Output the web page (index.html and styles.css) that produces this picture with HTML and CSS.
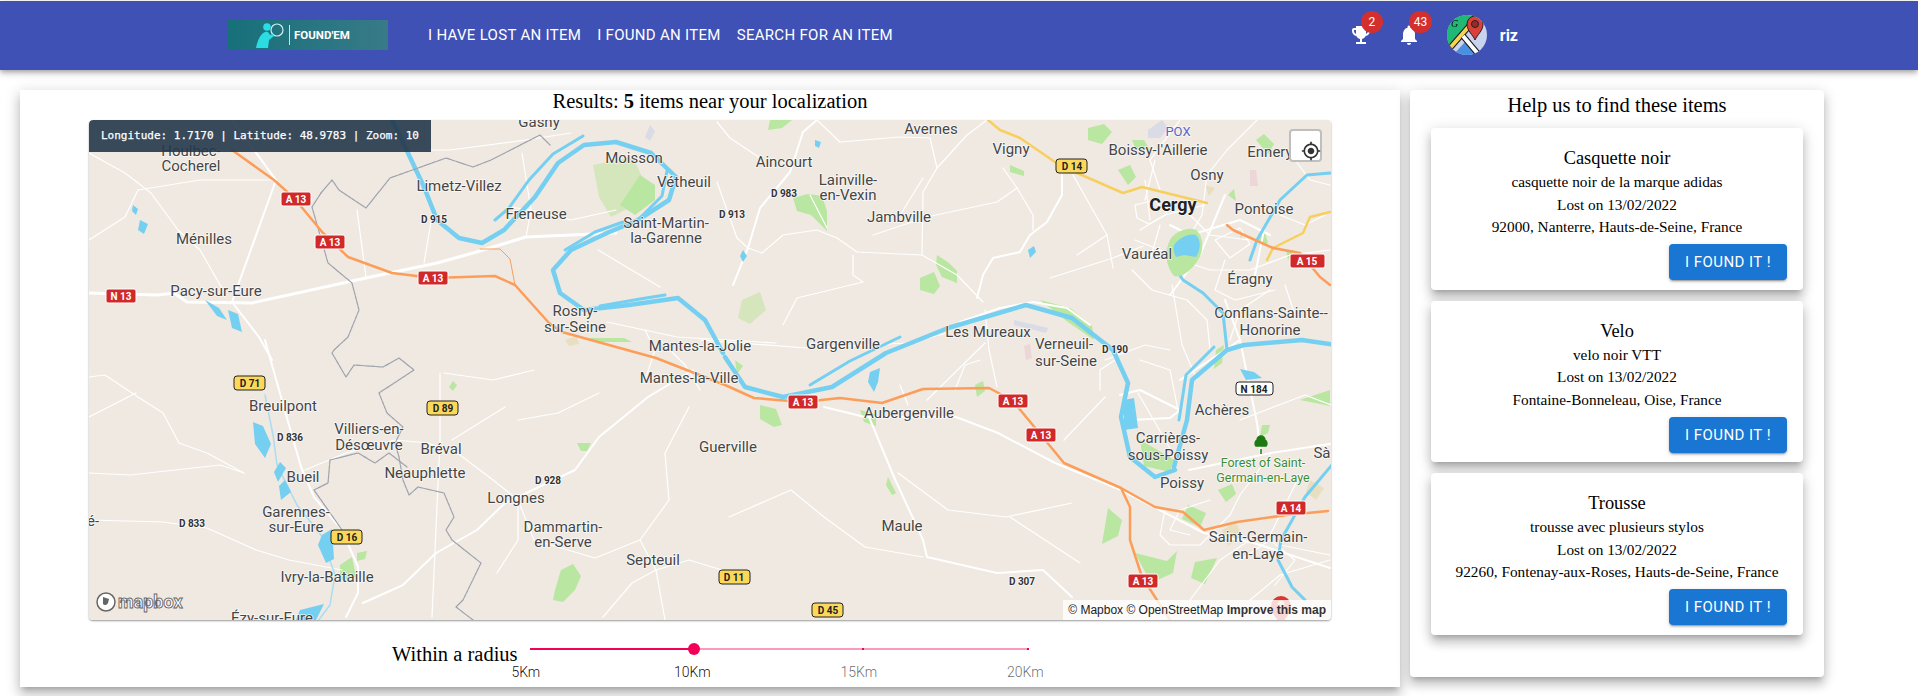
FILE: index.html
```html
<!DOCTYPE html>
<html lang="en">
<head>
  <meta charset="UTF-8" />
  <title>Found'em</title>
  <link rel="stylesheet" href="styles.css">
</head>
<body>

  <header class="topbar">
    <a class="logo" href="#">
      <svg width="30" height="26" viewBox="0 0 30 26">
        <circle cx="22" cy="8" r="6" fill="none" stroke="#cfeff2" stroke-width="1.2"/>
        <path d="M18 13l-3 2" stroke="#2bdde2" stroke-width="2"/>
        <circle cx="12" cy="5" r="3.8" fill="#2bdde2"/>
        <path d="M1 26c1-6 4-14 9-16 3-1 4 1 5 3l3-1 1 2-5 4-1 8z" fill="#2bdde2"/>
      </svg>
      <span class="logo-sep"></span>
      <span class="logo-text">FOUND'EM</span>
    </a>
    <nav class="nav">
      <a href="#">I have lost an item</a>
      <a href="#">I found an item</a>
      <a href="#">Search for an item</a>
    </nav>
    <div class="user">
      <div class="icon-btn">
        <svg viewBox="0 0 24 24" width="24" height="24"><path fill="#fff" d="M19 5h-2V3H7v2H5c-1.1 0-2 .9-2 2v1c0 2.55 1.92 4.63 4.39 4.94.63 1.5 1.98 2.63 3.61 2.96V19H7v2h10v-2h-4v-3.1c1.63-.33 2.98-1.46 3.61-2.96C19.08 12.63 21 10.55 21 8V7c0-1.1-.9-2-2-2zM5 8V7h2v3.82C5.84 10.4 5 9.3 5 8zm14 0c0 1.3-.84 2.4-2 2.82V7h2v1z"/></svg>
        <span class="badge">2</span>
      </div>
      <div class="icon-btn">
        <svg viewBox="0 0 24 24" width="24" height="24"><path fill="#fff" d="M12 22c1.1 0 2-.9 2-2h-4c0 1.1.89 2 2 2zm6-6v-5c0-3.07-1.64-5.64-4.5-6.32V4c0-.83-.67-1.5-1.5-1.5s-1.5.67-1.5 1.5v.68C7.63 5.36 6 7.92 6 11v5l-2 2v1h16v-1l-2-2z"/></svg>
        <span class="badge">43</span>
      </div>
      <svg class="avatar" viewBox="0 0 40 40" width="40" height="40">
        <rect width="40" height="40" fill="#c9d3ee"/>
        <path d="M0 0h22L0 36z" fill="#20b877"/>
        <path d="M0 0h28v6L6 30 0 36z" fill="#20b877"/>
        <path d="M6 40l12-13 13 13z" fill="#4a90e2"/>
        <path d="M3 33L24 9" stroke="#111" stroke-width="6"/>
        <path d="M3 33L24 9" stroke="#f7d354" stroke-width="4"/>
        <path d="M16 21l16 19" stroke="#111" stroke-width="6"/>
        <path d="M16 21l16 19" stroke="#fff" stroke-width="4"/>
        <path d="M28 25c-2-5-8-9-8-16a8 8 0 0 1 16 0c0 7-6 11-8 16z" fill="#d8403a" stroke="#222" stroke-width="1"/>
        <circle cx="28" cy="9" r="3.5" fill="#9b2a26" stroke="#222"/>
        <text x="4" y="12" class="avatar-g">G</text>
      </svg>
      <span class="username">riz</span>
    </div>
  </header>

  <main class="content">
    <section class="panel results">
      <h2 class="panel-title results-title">Results: <b>5</b> items near your localization</h2>

      <div class="map">
        <svg class="map-canvas" viewBox="89 120 1242 500" width="1242" height="500">
          <rect x="89" y="120" width="1242" height="500" fill="#efe9e1"/>

          <!-- zones urbaines -->
          <path class="urban" d="M1222 530l14-8 6 14-14 10z"/>
          <path class="urban" d="M565 340l12-4 2 8-10 2z"/>
          <path class="urban" d="M655 345l6-4 4 8-6 2z"/>
          <path class="urban" d="M1205 185l10 3-6 8z"/>
          <path class="urban" d="M1240 230l6 4-6 6z"/>
          <path class="urban" d="M1310 480l14 8-8 12-10-8z"/>
          <path class="pink" d="M1250 170l6 0 2 16-8 0z"/>
          <path class="pink" d="M1024 346l6-2 2 14-6 2z"/>
          <path class="lilac" d="M1148 130l14-10 6 8-8 10-12 0z"/>
          <path class="lilac" d="M1014 320l34 8-2 5-32-8z"/>
          <path class="lilac" d="M650 125l5 6-5 10-5-4z"/>

          <!-- parcs -->
          <path class="park" d="M593 165l40-8 18 40-40 20-12-20z"/>
          <path class="forest" d="M620 205l20-30 15 10 0 15-20 15z"/>
          <path class="forest" d="M793 198l15-4 14 2 5 15 0 20-8-8-8-8-14-4z"/>
          <path class="forest" d="M937 255l12 8 8 8 0 12-15-6-6-12z"/>
          <path class="forest" d="M920 278l14-6 6 14-6 8-14-4z"/>
          <path class="park" d="M742 300l18-8 6 18-16 14-12-6z"/>
          <path class="forest" d="M770 120h22l-10 8-14 2z"/>
          <path class="forest" d="M1088 128l16-4 8 8-10 12-14-4z"/>
          <path class="forest" d="M1010 165l14 6 0 5-14-4z"/>
          <path class="forest" d="M760 405l16 4 6 16-8 2-14-8z"/>
          <path class="forest" d="M588 338h36l8 4h-36z"/>
          <path class="forest" d="M975 385l8-4 2 10-8 6z"/>
          <path class="forest" d="M1108 508l14 12-4 16-16 8z"/>
          <path class="forest" d="M1135 553l32 8 10-10-4 22-22 10z"/>
          <path class="forest" d="M1195 562l22-4-12 26-14-6z"/>
          <path class="forest" d="M1188 505l18 8-6 14-18-8z"/>
          <path class="forest" d="M1218 490l14-6 4 10-10 8z"/>
          <path class="forest" d="M555 590l6-20 12-6 8 12-6 14-12 12-10-2z"/>
          <path class="forest" d="M340 565l12-8 4 20-16 4z"/>
          <path class="forest" d="M357 553l10-2-2 8-8 2z"/>
          <path class="forest" d="M577 443l14 0-4 8-6 0z"/>
          <path class="forest" d="M453 381l4 4-4 6-4-4z"/>
          <path class="forest" d="M860 410l16 4 0 12-12-4z"/>
          <path class="forest" d="M888 477l8 16-4 2-6-10z"/>
          <path class="forest" d="M1300 400l30-10v16z"/>
          <path class="forest" d="M1040 300l30 8 22 18 2 14-26-18z"/>
          <path class="forest" d="M1140 440l14 8 20 12-4 12-26-6z"/>
          <path class="forest" d="M1216 350l8-5-2 18-8 6z"/>
          <path class="forest" d="M1262 425l8 0-2 8-8 4z"/>
          <path class="forest" d="M1118 170l12-5 6 12-8 8z"/>
          <path class="forest" d="M1132 140l12 0 6 10-14 0z"/>
          <path class="forest" d="M1256 140l12 14 6-10-10-10z"/>
          <path class="forest" d="M1228 195l6-6 2 12z"/>
          <path class="forest" d="M1258 235l6-6 4 14-8 4z"/>
          <path class="forest" d="M1286 250l8 0-6 10z"/>
          <path class="forest" d="M735 360l8 6-6 8z"/>

          <!-- routes -->
          <g class="road-thin">
            <path d="M89 153l36 20 26 20 27 37 22 20 23 40"/>
            <path d="M276 180l-76 0-62 10"/>
            <path d="M89 240l36-23 13-27"/>
            <path d="M357 210l9 67"/>
            <path d="M433 210l-9 53"/>
            <path d="M408 150h42l76-10 45-7"/>
            <path d="M526 237l5-27-9-57"/>
            <path d="M509 207l22 3 40 10 45-10"/>
            <path d="M598 250l62 37"/>
            <path d="M607 322l70 15 99 6"/>
            <path d="M89 377l16-2 33 22 25 16 16 30 28 10 37 20"/>
            <path d="M89 473l41 2 90-10 24 8"/>
            <path d="M89 417l47-24"/>
            <path d="M89 520l74 2 44 6 49 22 33 10 53 10"/>
            <path d="M444 373l49 7 41-10"/>
            <path d="M440 373v67l-8 177"/>
            <path d="M305 470l41-17 49-13 33 3 32 12 33 25 25 20v40l-21 33"/>
            <path d="M505 407l-53 33"/>
            <path d="M518 420l40-7 41-20"/>
            <path d="M640 540l-45 18-61-18-16-40"/>
            <path d="M640 540l16 30 9 50"/>
            <path d="M640 540l29-40-4-47 24-46"/>
            <path d="M603 617l29-34 24-13 33-10 33 10"/>
            <path d="M700 340l107 8 100-5 41-10"/>
            <path d="M997 387l-8-37-4-40"/>
            <path d="M927 400l58-57"/>
            <path d="M729 517l62-27 33 27 41 30 58 10"/>
            <path d="M898 473l50 37 58 7 66-14"/>
            <path d="M1010 517l70 46"/>
            <path d="M1105 397l-41 43"/>
            <path d="M1138 393l37 64"/>
            <path d="M840 142l60-5 30 1 7 30-14 24-1 63"/>
            <path d="M937 168l30-33 20-15"/>
            <path d="M840 142l-23-22"/>
            <path d="M748 248l14 5 21-18 34-5 20 8 20 14 65 3 35 20 26 27"/>
            <path d="M810 195l17 33"/>
            <path d="M853 255v20l10 7-66 16-14 27"/>
            <path d="M1017 188l16 27v15"/>
            <path d="M1017 188l-20 14-47 10-23 5-54 18"/>
            <path d="M923 178l-24 39"/>
            <path d="M1003 168l14 20"/>
            <path d="M1073 175l34 60 6 33"/>
            <path d="M1050 278l63-20 30-12"/>
            <path d="M717 122l13 16 30 20"/>
            <path d="M717 182l20 56 11 10"/>
            <path d="M1107 235l-30 20"/>
            <path d="M1155 160l-10 40"/>
            <path d="M1180 120l-30 40 10 30"/>
            <path d="M1257 120l-30 30-20 25-5 40-15 25"/>
            <path d="M1135 240l25 10 20 10 30 10 40 0 40-15 40-5"/>
            <path d="M1270 290l-30 20-10 30"/>
            <path d="M1132 270l20 20 35 10 20 20 3 30"/>
            <path d="M1172 285l10 60 15 35"/>
            <path d="M1140 360l30 10 10 50"/>
            <path d="M1240 420l65-25 26 10"/>
            <path d="M1230 515l-30 30-30 0-10-10 5-25"/>
            <path d="M1270 455l-30 40-10 20"/>
            <path d="M1250 600l30-25 50-15"/>
            <path d="M1190 600l30-40 30-20"/>
            <path d="M1280 545l50 10"/>
            <path d="M1300 475l-30 60"/>
            <path d="M1205 205l-40 10-25 15"/>
            <path d="M1160 225l-10 35"/>
            <path d="M1190 215l20 20 40 5"/>
            <path d="M1135 205l20-5 12 14-18 10-12-6z"/>
            <path d="M1145 180l5 40"/>
            <path d="M1215 240l25-12 10 16-20 14z"/>
            <path d="M1280 215l25 10 20-10"/>
            <path d="M1225 260l-10 30 20 10 40-10"/>
            <path d="M1285 285l10 30"/>
            <path d="M1210 500l-30 10-10 20 20 5"/>
            <path d="M1240 560l30-20 25 20-20 25"/>
            <path d="M1105 360l40-15 25 5"/>
            <path d="M1100 390l0-20 15-10"/>
            <path d="M645 330l10 20-10 30"/>
            <path d="M660 340l25 25 15 25"/>
            <path d="M955 390l10-25 15-5"/>
            <path d="M900 385l8 20"/>
            <path d="M1295 160l15 20 20 5"/>
            <path d="M1310 130l-20 30"/>
          </g>
          <g class="road">
            <path d="M733 285l15-37 12-40 30-36 13-40 14-12"/>
            <path d="M265 340l16 57 20 70 13 30 28 33 16 37v26l-12 24"/>
            <path d="M363 603l40-18 33-32 41-23 28-27 70-33 24-33 49-40 45-27"/>
            <path d="M232 302l44-122"/>
            <path d="M232 302l27 35 13 23"/>
            <path d="M232 120l44 60"/>
            <path d="M869 417l25 60 29 63 4 17 70 16 46-3 29 27"/>
            <path d="M824 407l41 10 91 0 42 16 57 30 66 27 83 43"/>
            <path d="M1062 172l0 23-15 27-17 13-10 17-27 6-10 17-6 23"/>
            <path d="M960 322l40-14 33-6 34 6 23 17"/>
            <path d="M1240 340l17 83 4 32"/>
            <path d="M1336 443l-65 10-82 17"/>
            <path d="M1204 533l50 10 76 25"/>
            <path d="M1130 420l40-2 10-8 -40-20-20 5"/>
            <path d="M1225 300l15 40 -60 40"/>
            <path d="M1225 195l-25 60 -30 40"/>
            <path d="M1170 225l20 10 50-15 30 15"/>
            <path d="M1264 230l-10 50"/>
          </g>
          <path class="road-lg" d="M89 293l69 2 16-2 13 9 65 1 114-25 71-15 36-10 53-16 90-4"/>

          <!-- eau -->
          <g class="river">
            <path d="M392 120l16 33 16 34 13 33 22 18 23 5 22-13 31-33 23-34 26-18 32-3 35 11 25 24-7 23-31 20-31 13-36 17-18 20 7 23 24 17 45-5 49-7 27 22 18 33"/>
            <path d="M725 357l20 30 38 10 49-10 54-34 62-25 78-23 46 13 41 32 15 33-7 34 9 40 25 20 20-7"/>
            <path d="M1174 467l13-47 5-40 35-30 17-5 58-5 34 5"/>
          </g>
          <g class="river-mid">
            <path d="M1227 350l-4-37-20-20-20-13-12-18"/>
            <path d="M1330 173l-23 2-27 25-23 40-7 20"/>
            <path d="M1336 460l-31 37-24 43-3 20 14 27 13 13"/>
            <path d="M495 220l14-12 20-28 24-26 30-18"/>
            <path d="M565 250l30-18 28-10"/>
            <path d="M640 218l22-22 5-25"/>
            <path d="M600 306l40-7 25-4"/>
            <path d="M1179 420l7-45 28-28"/>
            <path d="M810 385l40-24 50-24"/>
          </g>
          <path class="river-thin" d="M265 395l8 40 4 30 20 40 24 30 14 40-5 30-15 20"/>
          <path class="forest" d="M1170 240c4-8 18-14 26-10 8 6 8 22 2 30-6 10-16 18-24 16-8-10-10-24-4-36z"/>
          <path class="water" d="M1174 245c6-8 16-12 22-10 6 6 4 16 0 22l-12-2-8 2c-2-4-3-8-2-12z"/>
          <path class="water" d="M870 372l10-4-2 14-4 10-6-10z"/>
          <path class="water" d="M1124 400l10-2 4 30-14 2z"/>
          <path class="water" d="M1240 369l14 3 8 6-16 2z"/>
          <path class="water" d="M253 422l10 4 8 18-6 14-10-14z"/>
          <path class="water" d="M280 462l6 6-8 14-4-10z"/>
          <path class="water" d="M285 480l6 12-10 8-2-14z"/>
          <path class="water" d="M322 535l10-6 2 30-8 4-8-18z"/>
          <path class="water" d="M300 610l24-6-8 16h-20z"/>
          <path class="water" d="M140 220l8 4-4 10-6-4z"/>
          <path class="water" d="M133 205l5 4-2 6-4-4z"/>
          <path class="water" d="M205 300l14 8 8 12-10-4z"/>
          <path class="water" d="M228 310l10 4 4 18-10-4z"/>
          <path class="water" d="M815 140l6 2-2 6-4-2z"/>
          <path class="water" d="M743 250l4 6-4 6-3-6z"/>
          <path class="water" d="M1028 250l6-4 2 6-6 6z"/>

          <!-- frontieres -->
          <g class="border">
            <path d="M321 193l11-13 7 10 27 18 24-30 56-20 27 9 18-7 49-25 10 10"/>
            <path d="M321 193l-9 14 16 56 24 20 7 27-11 27-14 13-2 3 14 24 8-12 29 2 16-9 15 12-35 23 8 20 16 14-8 16 4 14 4 23 6 15 9-8 26 6 10 24-8 13 6 10 29 23-18 37-7 7 17 13"/>
            <path d="M330 460l-2 23-14 7 12 17 16 23"/>
            <path d="M330 460l28-7 17 10 14-10 18 14"/>
          </g>

          <!-- autoroutes -->
          <path class="trunk" d="M988 120l12 10 20 8 35 24 22 11 46 20 19-6 65 16"/>
          <path class="trunk" d="M1267 260l6-12 30-15 7-16 20-5"/>
          <g class="motorway">
            <path d="M232 150l42 30 20 18 29 35 25 24 44 16 41 5 62-2 20 9 34 38 13 9 94 26 69 27 29 13 49 4 37-4 42 5 41-14 66-1 23 12 29 35 23 28 57 25 9 19v33l12 37 28 43"/>
            <path d="M1121 488l34 19 28 5 21 18 33-8 50-7 41-4"/>
            <path d="M1227 225l6 5 40 18 27 5 20 24 10 8"/>
          </g>
          <path class="motorway-thin" d="M480 249l20 0 10 10 5 26"/>

          <!-- noms -->
          <g class="place">
            <text x="191" y="156">Houlbec-</text>
            <text x="191" y="171">Cocherel</text>
            <text x="539" y="127">Gasny</text>
            <text x="634" y="163">Moisson</text>
            <text x="684" y="187">Vétheuil</text>
            <text x="459" y="191">Limetz-Villez</text>
            <text x="536" y="219">Freneuse</text>
            <text x="666" y="228">Saint-Martin-</text>
            <text x="666" y="243">la-Garenne</text>
            <text x="204" y="244">Ménilles</text>
            <text x="216" y="296">Pacy-sur-Eure</text>
            <text x="575" y="316">Rosny-</text>
            <text x="575" y="332">sur-Seine</text>
            <text x="700" y="351">Mantes-la-Jolie</text>
            <text x="689" y="383">Mantes-la-Ville</text>
            <text x="931" y="134">Avernes</text>
            <text x="784" y="167">Aincourt</text>
            <text x="848" y="185">Lainville-</text>
            <text x="848" y="200">en-Vexin</text>
            <text x="899" y="222">Jambville</text>
            <text x="1011" y="154">Vigny</text>
            <text x="1158" y="155">Boissy-l'Aillerie</text>
            <text x="1270" y="157">Ennery</text>
            <text x="1207" y="180">Osny</text>
            <text x="1264" y="214">Pontoise</text>
            <text x="1147" y="259">Vauréal</text>
            <text x="1250" y="284">Éragny</text>
            <text x="1271" y="318">Conflans-Sainte--</text>
            <text x="1270" y="335">Honorine</text>
            <text x="1222" y="415">Achères</text>
            <text x="1168" y="443">Carrières-</text>
            <text x="1168" y="460">sous-Poissy</text>
            <text x="1182" y="488">Poissy</text>
            <text x="1258" y="542">Saint-Germain-</text>
            <text x="1258" y="559">en-Laye</text>
            <text x="1326" y="458">Sàa</text>
            <text x="988" y="337">Les Mureaux</text>
            <text x="843" y="349">Gargenville</text>
            <text x="1064" y="349">Verneuil-</text>
            <text x="1066" y="366">sur-Seine</text>
            <text x="909" y="418">Aubergenville</text>
            <text x="728" y="452">Guerville</text>
            <text x="902" y="531">Maule</text>
            <text x="283" y="411">Breuilpont</text>
            <text x="369" y="434">Villiers-en-</text>
            <text x="369" y="450">Désœuvre</text>
            <text x="441" y="454">Bréval</text>
            <text x="425" y="478">Neauphlette</text>
            <text x="303" y="482">Bueil</text>
            <text x="516" y="503">Longnes</text>
            <text x="296" y="517">Garennes-</text>
            <text x="296" y="532">sur-Eure</text>
            <text x="563" y="532">Dammartin-</text>
            <text x="563" y="547">en-Serve</text>
            <text x="653" y="565">Septeuil</text>
            <text x="327" y="582">Ivry-la-Bataille</text>
            <text x="272" y="623">Ézy-sur-Eure</text>
            <text x="93" y="526">é-</text>
          </g>
          <text class="place place-big" x="1173" y="211">Cergy</text>
          <text class="place place-air" x="1178" y="136">POX</text>
          <g class="place place-forest">
            <text x="1263" y="467">Forest of Saint-</text>
            <text x="1263" y="482">Germain-en-Laye</text>
          </g>
          <path d="M1261 454v-5m-5-3a4 4 0 0 1 1-6 4 4 0 0 1 8 0 4 4 0 0 1 1 6z" fill="#1d7a12" stroke="#1d7a12" stroke-width="1.5"/>

          <g class="road-num">
            <text x="434" y="223">D 915</text>
            <text x="732" y="218">D 913</text>
            <text x="784" y="197">D 983</text>
            <text x="1115" y="353">D 190</text>
            <text x="1022" y="585">D 307</text>
            <text x="290" y="441">D 836</text>
            <text x="548" y="484">D 928</text>
            <text x="192" y="527">D 833</text>
          </g>

          <!-- panneaux -->
          <g class="shield-red">
            <rect x="281" y="192" width="30" height="14" rx="2"/><text x="296" y="203">A 13</text>
            <rect x="315" y="235" width="30" height="14" rx="2"/><text x="330" y="246">A 13</text>
            <rect x="418" y="271" width="30" height="14" rx="2"/><text x="433" y="282">A 13</text>
            <rect x="106" y="289" width="30" height="14" rx="2"/><text x="121" y="300">N 13</text>
            <rect x="788" y="395" width="30" height="14" rx="2"/><text x="803" y="406">A 13</text>
            <rect x="998" y="394" width="30" height="14" rx="2"/><text x="1013" y="405">A 13</text>
            <rect x="1026" y="428" width="30" height="14" rx="2"/><text x="1041" y="439">A 13</text>
            <rect x="1128" y="574" width="30" height="14" rx="2"/><text x="1143" y="585">A 13</text>
            <rect x="1276" y="501" width="30" height="14" rx="2"/><text x="1291" y="512">A 14</text>
            <rect x="1290" y="254" width="35" height="14" rx="2"/><text x="1307" y="265">A 15</text>
          </g>
          <g class="shield-yellow">
            <rect x="234" y="376" width="31" height="14" rx="3"/><text x="250" y="387">D 71</text>
            <rect x="427" y="401" width="31" height="14" rx="3"/><text x="443" y="412">D 89</text>
            <rect x="331" y="530" width="31" height="14" rx="3"/><text x="347" y="541">D 16</text>
            <rect x="719" y="570" width="31" height="14" rx="3"/><text x="734" y="581">D 11</text>
            <rect x="812" y="603" width="31" height="14" rx="3"/><text x="828" y="614">D 45</text>
            <rect x="1056" y="159" width="31" height="14" rx="3"/><text x="1072" y="170">D 14</text>
          </g>
          <g class="shield-white">
            <rect x="1236" y="382" width="37" height="13" rx="3"/><text x="1254" y="393">N 184</text>
          </g>

          <!-- marqueur -->
          <path d="M1281 625c-3-6-10-11-10-19a10 10 0 0 1 20 0c0 8-7 13-10 19z" fill="#d9372f"/>
          <circle cx="1281" cy="604" r="3.5" fill="#f6b7b3"/>

          <!-- logo -->
          <circle cx="106" cy="602" r="9" fill="#fff" stroke="#666" stroke-width="1.5"/>
          <path d="M103 597l6 2-1 4a3 3 0 0 1-5 1z" fill="#666"/>
          <text class="mapbox-logo" x="118" y="608">mapbox</text>
        </svg>

        <div class="map-info">Longitude: 1.7170 | Latitude: 48.9783 | Zoom: 10</div>

        <button class="locate" type="button" aria-label="Locate">
          <svg viewBox="0 0 24 24" width="20" height="20"><path fill="#333" d="M12 8c-2.21 0-4 1.79-4 4s1.79 4 4 4 4-1.79 4-4-1.79-4-4-4zm8.94 3c-.46-4.17-3.77-7.48-7.94-7.94V1h-2v2.06C6.83 3.52 3.52 6.83 3.06 11H1v2h2.06c.46 4.17 3.77 7.48 7.94 7.94V23h2v-2.06c4.17-.46 7.48-3.77 7.94-7.94H23v-2h-2.06zM12 19c-3.87 0-7-3.13-7-7s3.13-7 7-7 7 3.13 7 7-3.13 7-7 7z"/></svg>
        </button>

        <div class="attrib">© Mapbox © OpenStreetMap <b>Improve this map</b></div>
      </div>

      <div class="radius">
        <span class="radius-label">Within a radius</span>
        <div class="slider">
          <div class="slider-rail">
            <span class="slider-track"></span>
            <span class="slider-thumb"></span>
            <span class="slider-mark mark-15"></span>
            <span class="slider-mark mark-20"></span>
          </div>
          <div class="slider-labels">
            <span class="on">5Km</span>
            <span class="on">10Km</span>
            <span>15Km</span>
            <span>20Km</span>
          </div>
        </div>
      </div>
    </section>

    <aside class="panel help">
      <h2 class="panel-title help-title">Help us to find these items</h2>

      <article class="item">
        <h3>Casquette noir</h3>
        <p>casquette noir de la marque adidas</p>
        <p>Lost on 13/02/2022</p>
        <p>92000, Nanterre, Hauts-de-Seine, France</p>
        <div class="item-actions"><button type="button">I found it !</button></div>
      </article>

      <article class="item">
        <h3>Velo</h3>
        <p>velo noir VTT</p>
        <p>Lost on 13/02/2022</p>
        <p>Fontaine-Bonneleau, Oise, France</p>
        <div class="item-actions"><button type="button">I found it !</button></div>
      </article>

      <article class="item">
        <h3>Trousse</h3>
        <p>trousse avec plusieurs stylos</p>
        <p>Lost on 13/02/2022</p>
        <p>92260, Fontenay-aux-Roses, Hauts-de-Seine, France</p>
        <div class="item-actions"><button type="button">I found it !</button></div>
      </article>
    </aside>
  </main>

</body>
</html>
```

FILE: styles.css
```css
* {
  box-sizing: border-box;
}

html, body {
  height: 100%;
}

body {
  margin: 0;
  padding-top: 1px;
  background-color: #fff;
  color: #000;
  font-family: 'Liberation Serif', serif;
  overflow: hidden;
}

/* barre du haut */
.topbar {
  display: flex;
  align-items: center;
  height: 69px;
  padding-left: 228px;
  padding-right: 400px;
  padding-bottom: 1px;
  background-color: #3f51b5;
  color: #fff;
  font-family: Roboto, sans-serif;
  box-shadow: 0 2px 4px -1px rgba(0,0,0,.2), 0 4px 5px rgba(0,0,0,.14), 0 1px 10px rgba(0,0,0,.12);
  position: relative;
  z-index: 2;
}

.logo {
  display: flex;
  align-items: center;
  gap: 4px;
  width: 160px;
  height: 30px;
  padding-left: 27px;
  background: linear-gradient(90deg, #17707a, #387a88);
  color: #fff;
  text-decoration: none;
}

.logo-sep {
  width: 1px;
  height: 20px;
  background-color: #cfe3e6;
}

.logo-text {
  font-size: 11.5px;
  font-weight: 700;
}

.nav {
  display: flex;
  gap: 16px;
  margin-left: 40px;
}

.nav a {
  color: #fff;
  font-size: 15px;
  letter-spacing: .3px;
  text-decoration: none;
  text-transform: uppercase;
}

.user {
  display: flex;
  align-items: center;
  margin-left: auto;
}

.icon-btn {
  position: relative;
  width: 24px;
  height: 24px;
  margin-right: 24px;
}

.icon-btn + .icon-btn {
  margin-right: 26px;
}

.badge {
  position: absolute;
  top: -12px;
  left: 12px;
  min-width: 22px;
  height: 22px;
  padding: 0 5px;
  border-radius: 11px;
  background-color: #d32f2f;
  font-size: 12px;
  line-height: 22px;
  text-align: center;
}

.avatar {
  border-radius: 50%;
}

.avatar-g {
  font-family: 'Liberation Serif', serif;
  font-size: 10px;
  font-style: italic;
  fill: #111;
}

.username {
  margin-left: 13px;
  font-size: 16px;
  font-weight: 700;
}

/* contenu */
.content {
  display: flex;
  align-items: flex-start;
  gap: 10px;
  padding: 20px 20px 0;
}

.panel {
  background-color: #fff;
  box-shadow: 0 5px 5px -3px rgba(0,0,0,.2), 0 8px 10px 1px rgba(0,0,0,.14), 0 3px 14px 2px rgba(0,0,0,.12);
}

.panel-title {
  margin: 0;
  font-size: 20.5px;
  font-weight: 400;
  line-height: 30px;
  text-align: center;
}

.results-title {
  line-height: 22px;
  margin-bottom: 8px;
}

.results {
  width: 1380px;
  height: 597px;
}

.map {
  position: relative;
  width: 1242px;
  height: 500px;
  margin: 0 auto;
  border-radius: 4px;
  overflow: hidden;
  box-shadow: 0 1px 2px rgba(0,0,0,.4);
}

.map-canvas {
  display: block;
}

.map-canvas text {
  text-anchor: middle;
}

.road-thin, .road, .road-lg, .river, .river-mid, .river-thin, .motorway, .motorway-thin, .trunk, .border {
  fill: none;
  stroke-linejoin: round;
  stroke-linecap: round;
}

.road-thin path { stroke: #fff; stroke-width: 1.2; }
.road path { stroke: #fff; stroke-width: 2; }
.road-lg { stroke: #fff; stroke-width: 3; }
.river path { stroke: #75cff0; stroke-width: 4.5; }
.river-mid path { stroke: #75cff0; stroke-width: 3; }
.river-thin { stroke: #a8ddf2; stroke-width: 1.5; }
.water { fill: #75cff0; }
.forest { fill: #b9e6a0; }
.park { fill: #d5e6bd; }
.urban { fill: #e8dfc0; }
.pink { fill: #ecd6d8; }
.lilac { fill: #d9dbe6; }
.border path { stroke: #9ea2ad; stroke-width: 1.2; stroke-dasharray: 4 1; }
.trunk { stroke: #f7cf5e; stroke-width: 2.5; }
.motorway path { stroke: #fc9e5a; stroke-width: 2.5; }
.motorway-thin { stroke: #fc9e5a; stroke-width: 1; }

.place text, text.place {
  font-family: Roboto, sans-serif;
  font-size: 15px;
  fill: #454545;
  stroke: rgba(255,255,255,.75);
  stroke-width: 1.5px;
  paint-order: stroke;
}

text.place-big {
  font-size: 18px;
  font-weight: 700;
  fill: #222;
}

text.place-air {
  font-size: 13px;
  fill: #5566c0;
}

.place-forest text {
  font-size: 12.5px;
  fill: #3d8c36;
}

.road-num text {
  font-family: Roboto, sans-serif;
  font-size: 10px;
  font-weight: 700;
  fill: #333;
  stroke: rgba(255,255,255,.8);
  stroke-width: 1.5px;
  paint-order: stroke;
}

.shield-red rect { fill: #d1282a; stroke: #fff; stroke-width: 1; }
.shield-yellow rect { fill: #fcd85a; stroke: #222; stroke-width: 1; }
.shield-white rect { fill: #fff; stroke: #222; stroke-width: 1; }

.shield-red text, .shield-yellow text, .shield-white text {
  font-family: Roboto, sans-serif;
  font-size: 10px;
  font-weight: 700;
}

.shield-red text { fill: #fff; }
.shield-yellow text, .shield-white text { fill: #222; }

.map-canvas text.mapbox-logo {
  font-family: Roboto, sans-serif;
  font-size: 18px;
  font-weight: 700;
  fill: #fff;
  stroke: #666;
  stroke-width: .9px;
  text-anchor: start;
}

.map-info {
  position: absolute;
  top: 0;
  left: 0;
  padding: 6px 12px;
  background-color: rgba(35,55,75,.9);
  color: #fff;
  font-family: 'DejaVu Sans Mono', monospace;
  font-size: 11px;
  line-height: 20px;
  -webkit-text-stroke: .25px #fff;
  border-top-left-radius: 4px;
}

.locate {
  position: absolute;
  top: 9px;
  right: 9px;
  width: 33px;
  height: 33px;
  padding: 10px 0 0 10px;
  background-color: #fff;
  border: 2px solid rgba(0,0,0,.25);
  border-radius: 4px;
}

.locate svg {
  display: block;
}

.attrib {
  position: absolute;
  right: 0;
  bottom: 0;
  padding: 2px 5px;
  background-color: rgba(255,255,255,.8);
  color: #222;
  font-family: 'Liberation Sans', sans-serif;
  font-size: 12px;
  line-height: 16px;
}

.attrib b {
  font-weight: 700;
  color: #333;
}

/* curseur du rayon */
.radius {
  display: flex;
  align-items: flex-start;
  padding: 20px 0 0 372px;
}

.radius-label {
  font-size: 20.5px;
  line-height: 28px;
  margin-right: 12px;
}

.slider {
  width: 499px;
  padding-top: 8px;
}

.slider-rail {
  position: relative;
  height: 2px;
  background-color: #fb9bbb;
}

.slider-track {
  position: absolute;
  left: 0;
  top: 0;
  width: 164px;
  height: 2px;
  background-color: #f50057;
}

.slider-thumb {
  position: absolute;
  left: 158px;
  top: -5px;
  width: 12px;
  height: 12px;
  border-radius: 50%;
  background-color: #f50057;
}

.slider-mark {
  position: absolute;
  top: 0;
  width: 2px;
  height: 2px;
  background-color: #f50057;
}

.mark-15 { left: 332px; }
.mark-20 { left: 497px; }

.slider-labels {
  display: flex;
  margin: 12px 0 0 -87px;
  font-family: Roboto, sans-serif;
  font-size: 14px;
  line-height: 20px;
  font-weight: 300;
  color: rgba(0,0,0,.6);
}

.slider-labels span {
  flex: 0 0 166.5px;
  text-align: center;
}

.slider-labels .on {
  color: rgba(0,0,0,.95);
}

/* colonne de droite */
.help {
  width: 414px;
  height: 587px;
  padding: 0 21px;
  border-radius: 4px;
}

.help-title {
  margin-bottom: 8px;
}

.item {
  display: flex;
  flex-direction: column;
  height: 161.5px;
  margin-bottom: 11px;
  padding: 17px 16px 0;
  border-radius: 4px;
  background-color: #fff;
  text-align: center;
  box-shadow: 0 5px 5px -3px rgba(0,0,0,.2), 0 8px 10px 1px rgba(0,0,0,.14), 0 3px 14px 2px rgba(0,0,0,.12);
}

.item h3 {
  margin: 0;
  font-size: 18.4px;
  font-weight: 400;
  line-height: 26px;
}

.item p {
  margin: 0;
  font-size: 15.3px;
  line-height: 22.5px;
}

.item-actions {
  display: flex;
  justify-content: flex-end;
  margin-top: 5.5px;
}

.item-actions button {
  height: 36px;
  width: 118px;
  padding: 0;
  border: none;
  border-radius: 4px;
  background-color: #1976d2;
  color: #fff;
  font-family: Roboto, sans-serif;
  font-size: 15px;
  letter-spacing: .03em;
  text-transform: uppercase;
  box-shadow: 0 3px 1px -2px rgba(0,0,0,.2), 0 2px 2px rgba(0,0,0,.14), 0 1px 5px rgba(0,0,0,.12);
}
```
